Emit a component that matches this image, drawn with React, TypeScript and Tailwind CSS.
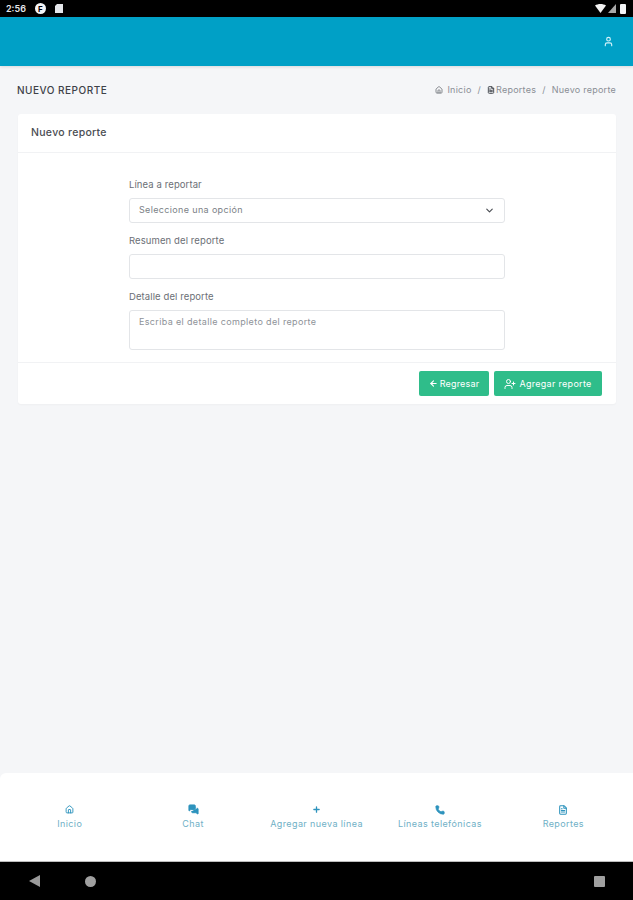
import { ChevronDown, User, UserPlus, ArrowLeft, Home, Plus, Phone, FileText, MessagesSquare } from "lucide-react";

const font = "font-['Inter','Liberation_Sans',sans-serif]";

function StatusBar() {
  return (
    <div className="h-[17px] bg-black flex items-center justify-between pl-[6px] pr-[7px] shrink-0">
      <div className="flex items-center gap-[9px]">
        <span className="text-[9px] font-semibold text-gray-200 leading-none">2:56</span>
        <span className="w-[11px] h-[11px] rounded-full bg-gray-100 flex items-center justify-center text-[8px] font-bold text-black leading-none">F</span>
        <svg width="8" height="9" viewBox="0 0 8 9"><path d="M2 0H8V9H0V2Z" fill="#e5e7eb" /></svg>
      </div>
      <div className="flex items-center gap-[2px]">
        <svg width="11" height="9" viewBox="0 0 11 9"><path d="M0 1.5C3-.5 8-.5 11 1.5L5.5 9Z" fill="#f2f2f2" /></svg>
        <svg width="8" height="9" viewBox="0 0 8 9"><path d="M8 0V9H0Z" fill="#a8a8a8" /></svg>
        <span className="w-[6px] h-[10px] rounded-[1px] bg-gray-100 ml-[2px]" />
      </div>
    </div>
  );
}

function Field({ label, children }: { label: string; children: React.ReactNode }) {
  return (
    <div className="flex flex-col">
      <label className="text-[9.5px] leading-[14px] tracking-[0.1px] text-[#6b6f76] mb-[6px]">{label}</label>
      {children}
    </div>
  );
}

function NavItem({ icon, label }: { icon: React.ReactNode; label: string }) {
  return (
    <div className="flex-1 flex flex-col items-center gap-[2px]">
      <div className="h-[11px] flex items-center text-[#2d93bd]">{icon}</div>
      <span className="text-[9px] leading-[14px] tracking-[0.4px] text-[#6fb0c6] whitespace-nowrap">{label}</span>
    </div>
  );
}

export default function App() {
  return (
    <div className={`${font} w-[633px] h-[900px] flex flex-col bg-[#f5f6f8] overflow-hidden`}>
      <StatusBar />
      <header className="h-[49px] bg-[#00a0c6] flex items-center justify-end pr-[19px] shrink-0 shadow-[0_1px_3px_rgba(0,0,0,0.12)]">
        <User size={11} className="text-[#d5f3fa]" strokeWidth={2.5} />
      </header>
      <main className="flex-1 pl-[18px] pr-[17px]">
        <div className="flex items-center justify-between h-[48px]">
          <h1 className="text-[10px] font-medium tracking-[0.5px] -ml-[1px] text-[#3e4148]">NUEVO REPORTE</h1>
          <nav className="flex items-center text-[9px] tracking-[0.25px] text-[#8a8e95]">
            <Home size={8} className="mr-[4px] text-[#70747a]" strokeWidth={2.5} />
            <span>Inicio</span>
            <span className="mx-[6px]">/</span>
            <FileText size={8} className="mr-[1px] text-[#4a4e55]" strokeWidth={3} />
            <span>Reportes</span>
            <span className="mx-[6px]">/</span>
            <span>Nuevo reporte</span>
          </nav>
        </div>
        <section className="bg-white rounded-[3px] shadow-[0_1px_2px_rgba(0,0,0,0.03)] h-[290px] flex flex-col">
          <div className="h-[39px] border-b border-[#f1f2f4] flex items-center pl-[13px]">
            <h2 className="text-[10.5px] font-medium tracking-[0.3px] text-[#4a4d53]">Nuevo reporte</h2>
          </div>
          <div className="flex-1 pt-[25px] pl-[111px] pr-[111px] flex flex-col gap-[11px]">
            <Field label="Línea a reportar">
              <div className="h-[25px] border border-[#e3e5e8] rounded-[3px] flex items-center justify-between pl-[9px] pr-[9px]">
                <span className="text-[9px] tracking-[0.35px] -mt-[1px] text-[#7b7f86]">Seleccione una opción</span>
                <ChevronDown size={11} strokeWidth={2.5} className="text-[#4a4d53]" />
              </div>
            </Field>
            <Field label="Resumen del reporte">
              <div className="h-[25px] border border-[#e3e5e8] rounded-[3px]" />
            </Field>
            <Field label="Detalle del reporte">
              <div className="h-[40px] border border-[#e3e5e8] rounded-[3px] pl-[9px] pt-[4px]">
                <span className="block text-[9px] leading-[14px] tracking-[0.35px] text-[#8e9298]">Escriba el detalle completo del reporte</span>
              </div>
            </Field>
          </div>
          <div className="h-[42px] border-t border-[#f1f2f4] flex items-center justify-end gap-[5px] pr-[14px]">
            <button className="h-[25px] w-[70px] rounded-[2px] bg-[#2fbd8a] text-white text-[9px] tracking-[0.2px] flex items-center justify-center gap-[2px]">
              <ArrowLeft size={9} strokeWidth={3} />
              Regresar
            </button>
            <button className="h-[25px] w-[108px] rounded-[2px] bg-[#2fbd8a] text-white text-[9px] tracking-[0.3px] flex items-center justify-center gap-[3px]">
              <UserPlus size={12} />
              Agregar reporte
            </button>
          </div>
        </section>
      </main>
      <nav className="h-[89px] bg-white rounded-tl-[6px] flex items-start pt-[31px] px-[8px] shrink-0 border-b border-[#bdbdbd]">
        <NavItem icon={<Home size={9} strokeWidth={2.5} />} label="Inicio" />
        <NavItem icon={<MessagesSquare size={11} fill="currentColor" />} label="Chat" />
        <NavItem icon={<Plus size={9} strokeWidth={3.5} />} label="Agregar nueva línea" />
        <NavItem icon={<Phone size={10} fill="currentColor" />} label="Líneas telefónicas" />
        <NavItem icon={<FileText size={10} strokeWidth={2.5} />} label="Reportes" />
      </nav>
      <div className="h-[38px] bg-black shrink-0 flex items-center justify-between pl-[29px] pr-[28px]">
        <div className="flex items-center gap-[45px]">
          <svg width="11" height="12" viewBox="0 0 11 12"><path d="M11 0V12L0 6Z" fill="#9a9a9a" /></svg>
          <span className="w-[11px] h-[11px] rounded-full bg-[#a0a0a0]" />
        </div>
        <span className="w-[11px] h-[11px] rounded-[1px] bg-[#a0a0a0]" />
      </div>
    </div>
  );
}
